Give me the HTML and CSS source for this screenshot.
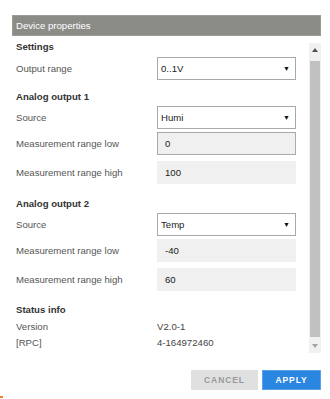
FILE: index.html
```html
<!DOCTYPE html>
<html>
<head>
<meta charset="utf-8">
<link rel="stylesheet" href="styles.css">
</head>
<body>
<div class="dialog">
  <div class="header">Device properties</div>
  <div class="body">
    <div class="content">
      <div class="title first">Settings</div>
      <div class="row sel-row">
        <div class="label">Output range</div>
        <div class="select">0..1V<span class="arrow">&#9660;</span></div>
      </div>

      <div class="title">Analog output 1</div>
      <div class="row sel-row">
        <div class="label">Source</div>
        <div class="select">Humi<span class="arrow">&#9660;</span></div>
      </div>
      <div class="row in-row">
        <div class="label">Measurement range low</div>
        <div class="input focused">0</div>
      </div>
      <div class="row in-row">
        <div class="label">Measurement range high</div>
        <div class="input">100</div>
      </div>

      <div class="title">Analog output 2</div>
      <div class="row sel-row">
        <div class="label">Source</div>
        <div class="select">Temp<span class="arrow">&#9660;</span></div>
      </div>
      <div class="row in-row">
        <div class="label">Measurement range low</div>
        <div class="input">-40</div>
      </div>
      <div class="row in-row">
        <div class="label">Measurement range high</div>
        <div class="input">60</div>
      </div>

      <div class="title status-title">Status info</div>
      <div class="info"><div class="label">Version</div><div class="value">V2.0-1</div></div>
      <div class="info"><div class="label">[RPC]</div><div class="value">4-164972460</div></div>
    </div>
    <div class="scrollbar">
      <div class="sb-btn"><svg width="6" height="4" viewBox="0 0 6 4"><path d="M0 4 L3 0 L6 4 Z" fill="#505050"/></svg></div>
      <div class="sb-thumb"></div>
      <div class="sb-btn"><svg width="6" height="4" viewBox="0 0 6 4"><path d="M0 0 L3 4 L6 0 Z" fill="#a3a3a3"/></svg></div>
    </div>
  </div>
  <div class="footer">
    <div class="btn cancel">CANCEL</div>
    <div class="btn apply">APPLY</div>
  </div>
</div>
<div class="corner"></div>
</body>
</html>
```
FILE: styles.css
```css
html, body {
  margin: 0;
  padding: 0;
  background: #ffffff;
}
body {
  width: 330px;
  height: 399px;
  font-family: "Liberation Sans", Arial, sans-serif;
  font-size: 9.6px;
  color: #555555;
  position: relative;
  overflow: hidden;
}
.dialog {
  margin-left: 12px;
  padding-top: 15px;
  width: 309px;
}
.header {
  height: 21px;
  background: #8c8c87;
  color: #ffffff;
  padding-left: 3px;
  font-size: 9.6px;
  box-sizing: border-box;
  border: 1px solid #9c9c97;
  line-height: 19px;
}
.body {
  display: flex;
  height: 320px;
}
.content {
  width: 284px;
  padding-left: 4px;
  padding-top: 4px;
  display: flex;
  flex-direction: column;
}
.title {
  height: 14px;
  line-height: 14px;
  font-weight: bold;
  color: #333333;
  padding-top: 7px;
  margin-bottom: 2px;
}
.title.first {
  padding-top: 0;
  margin-bottom: 3px;
}
.row {
  display: flex;
  align-items: center;
}
.sel-row {
  height: 23px;
  margin-bottom: 3px;
}
.in-row {
  height: 23px;
  margin-bottom: 6px;
}
.label {
  width: 141px;
  flex-shrink: 0;
  color: #555555;
}
.select {
  width: 139px;
  height: 23px;
  box-sizing: border-box;
  border: 1px solid #a9a9a9;
  background: #ffffff;
  color: #222222;
  padding-left: 3px;
  line-height: 21px;
  position: relative;
}
.arrow {
  position: absolute;
  right: 5px;
  top: 0;
  font-size: 7px;
  color: #111111;
}
.input {
  width: 139px;
  height: 23px;
  box-sizing: border-box;
  background: #f0f0f0;
  color: #222222;
  padding-left: 8px;
  line-height: 23px;
}
.input.focused {
  border: 1px solid #a9a9a9;
  padding-left: 7px;
  line-height: 21px;
}
.status-title {
  padding-top: 6px;
  margin-bottom: 2px;
}
.info {
  display: flex;
  height: 16px;
  line-height: 16px;
}
.value {
  color: #444444;
}
.scrollbar {
  margin-left: 11px;
  margin-top: 7px;
  width: 12px;
  height: 310px;
  background: #f1f1f1;
  display: flex;
  flex-direction: column;
  align-items: center;
}
.sb-btn {
  height: 14px;
  width: 12px;
  display: flex;
  align-items: center;
  justify-content: center;
}
.sb-thumb {
  flex: 1;
  width: 10px;
  background: #c1c1c1;
  margin: 4px 0 2px;
}
.footer {
  display: flex;
  justify-content: flex-end;
  gap: 4px;
  margin-top: 14px;
}
.btn {
  height: 20px;
  line-height: 20px;
  font-size: 8.5px;
  font-weight: bold;
  letter-spacing: 0.9px;
  text-align: center;
  box-sizing: border-box;
}
.cancel {
  width: 67px;
  background: #e0e0e0;
  color: #9a9a9a;
}
.apply {
  width: 59px;
  background: #2b86e2;
  color: #ffffff;
  border: 1px solid #5aa2ea;
  line-height: 18px;
}
.corner {
  position: absolute;
  left: 0;
  top: 396px;
  width: 3px;
  height: 2px;
  background: #e8803a;
}
```
